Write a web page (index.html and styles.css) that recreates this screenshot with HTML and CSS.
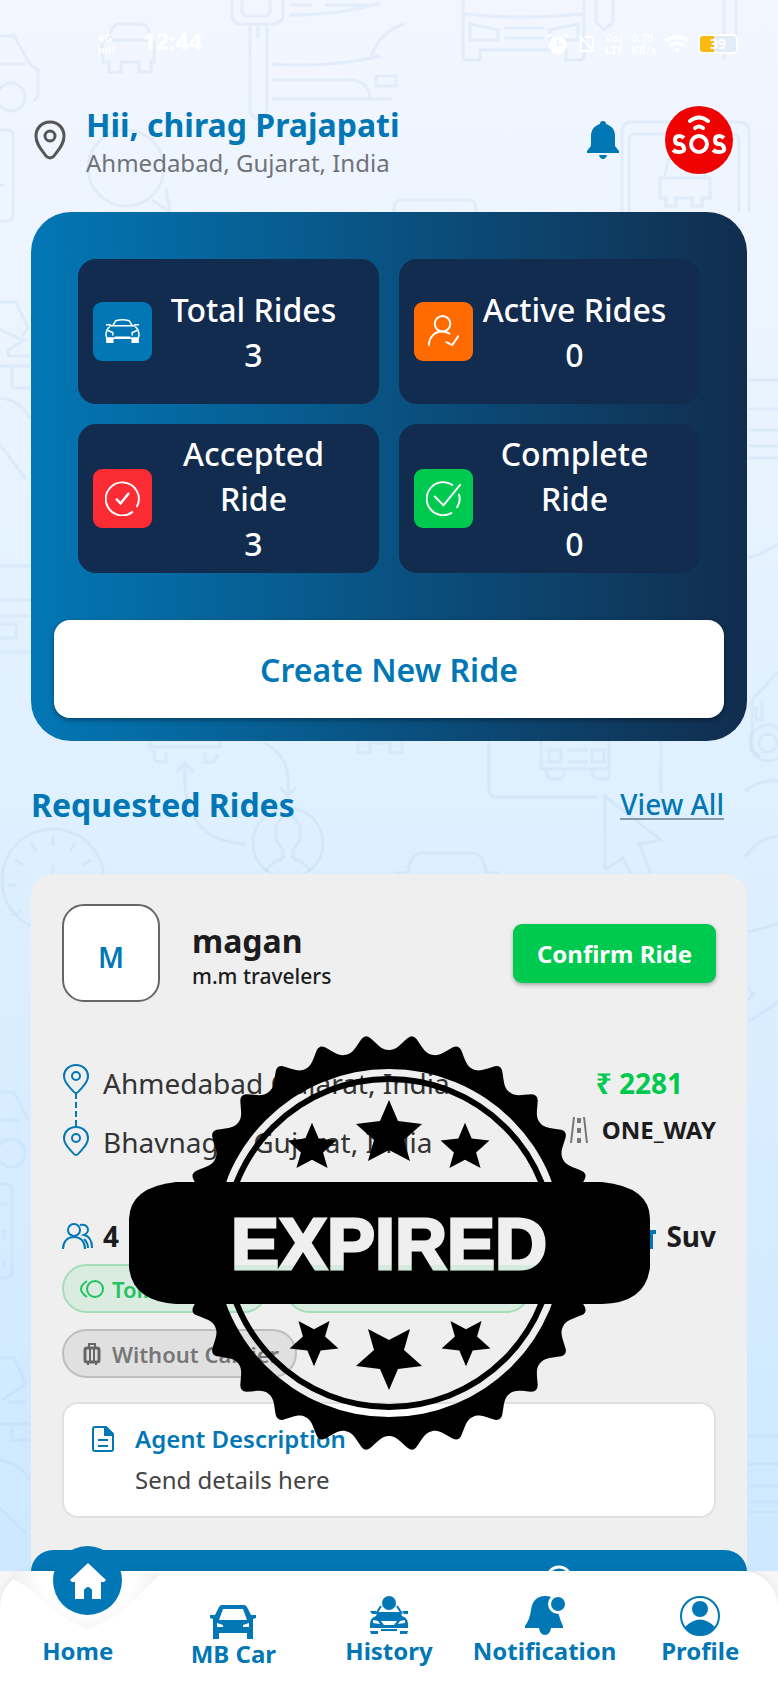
FILE: index.html
```html
<!DOCTYPE html>
<html lang="en">
<head>
    <meta charset="UTF-8">
    <meta name="viewport" content="width=device-width, initial-scale=1.0">
    <title>MB Car</title>
    <link rel="stylesheet" href="styles.css">
</head>
<body>
    <svg class="doodles" viewBox="0 0 778 1688" preserveAspectRatio="xMidYMin slice" aria-hidden="true">
        <!-- top -->
        <path d="M0 36h14l16 28 8 6v26l-4 5M0 64h26"/><circle cx="11" cy="97" r="14"/>
        <path d="M110 40q0-16 10-16h20q10 0 10 16M102 46q0-6 6-6h40q6 0 6 6v16h-3v10h-12v-10h-18v10h-12v-10h-6z"/>
        <path d="M232 0v14q0 10 10 10h30q11 0 11-10V0M242 0v10q0 6 6 6h16q6 0 6-6V0M250 24v88q8 14 17 0V24M258 24v14"/>
        <path d="M290 5h22M325 5h45M290 15q50 0 90-12M272 64q60 4 108-8M272 80h80q18 2 18 20M272 99h120M370 60q8-28 34-36M376 76h20v10h-20z"/>
        <path d="M463 0v56q0 4 5 4h12v-10h86v10h12q6 0 6-4V0M463 14q60 6 120 0M470 24l28 6v10h-28zM504 28h40M504 38h40M578 24l-28 6v10h28z"/>
        <path d="M596 0v22l8 8 9-8V0M724 0v60M736 0v40"/>
        <circle cx="126" cy="168" r="38"/><path d="M152 200l18 12-4-24"/>
        <path d="M622 212v-80q0-10 10-10h107q10 0 10 10v80M629 212v-72q0-6 6-6h97q7 0 7 6v72M664 178l6-24h30l6 24M660 178h50v20h-8v8h-10v-8h-16v8h-10v-8h-6z"/>
        <path d="M394 212v-4q0-8 8-8h66q8 0 8 8v4M0 130h8q5 0 5 5v80q0 6-6 6H0M0 185h4"/>
        <!-- sides of the stats card -->
        <path d="M0 302h16l12 26-6 8M0 330l24 10-16 10v6h22M0 366h30M12 366v18q0 4 4 4h14M0 398q20 2 30 20M0 445l26 34M0 566h31M0 600h31M0 616h30M0 624h16v14H0M0 652h31"/>
        <path d="M748 380h30M748 409h30M748 430h30M748 446h30M748 458h30M748 558q14-4 30-14M752 700l26-28M752 700v50l8 6M756 706v14h6v-20"/><circle cx="768" cy="743" r="18"/><circle cx="768" cy="743" r="9"/>
        <path d="M745 791q16-12 33-10M745 857q16-22 33-20"/>
        <!-- headings strip -->
        <path d="M150 741v6h70v-6M154 750v6q0 6 6 6h6v-10M205 752v10h6q6 0 6-8M185 762q-6 80 62 82M176 772l9-9 9 9M264 743q28 12 24 52M280 788l8 8 8-8"/>
        <circle cx="288" cy="843" r="35"/><path d="M276 826q12-22 24 0v14l-7 10v8q14 6 18 14M276 826v14l7 10v8q-14 6-18 14"/>
        <circle cx="53" cy="880" r="51"/><path d="M53 836v10M31 843l5 8M75 843l-5 8M15 860l8 5M91 860l-8 5M53 865v20M12 915l9-4M8 885h8"/>
        <path d="M358 741v12h12v-10h20v10h12v-12M489 741v48q0 8 8 8h100M661 741v52M541 741v28h68v-28M549 750h12v12h-12zM568 750h20M568 762h20M592 750h12v12h-12zM546 771q0 8 8 8h6q4-2 4-8M592 771q0 8 8 8h6q4-2 4-8"/>
        <path d="M605 870v-74l56 44-22 4 12 30M605 870l18-12 8 16M394 873h14q2-20 14-20h50q12 0 14 20h12"/>
        <!-- sides of the ride card -->
        <path d="M748 932l30-8M748 1000l6-6-6-6M748 1022l30-20M0 1092h14l14 28M0 1120h20M0 1184h6q6 0 6 6v84q0 4-12 4M0 1204h8M4 1230v10M4 1260v8"/><circle cx="11" cy="1153" r="14"/>
        <path d="M0 1358h14l12 26-24 16M8 1402h18M0 1424h30M12 1424v16h18M0 1460q20 4 30 20M0 1508l26 26M748 1436h30M748 1464h30M748 1486h30M748 1502h30M748 1512h30"/>
    </svg>

    <div class="status-bar">
        <div class="status-left">
            <span class="network">4G<br>ıııll</span>
            <span class="clock">12:44</span>
        </div>
        <div class="status-right">
            <svg width="22" height="22" viewBox="0 0 22 22" fill="#fff"><circle cx="11" cy="12" r="9"/><path d="M1 4l4-3M21 4l-4-3" stroke="#fff" stroke-width="2"/><path d="M11 7v5h4" fill="none" stroke="#eef5fe" stroke-width="2"/></svg>
            <svg width="20" height="20" viewBox="0 0 20 20" fill="none" stroke="#fff" stroke-width="2"><path d="M2 2l16 16M4 6v11h13M7 3h9v10"/></svg>
            <span class="tiny">Vo)<br>LTE</span>
            <span class="tiny">0.70<br>KB/s</span>
            <svg width="26" height="20" viewBox="0 0 26 20" fill="none" stroke="#fff" stroke-width="4"><path d="M2 7q11-9 22 0M6 12q7-6 14 0"/><path d="M11 16h4"/></svg>
            <span class="battery">39</span>
        </div>
    </div>

    <header class="header">
        <svg class="pin" viewBox="0 0 32 40" fill="none" stroke="#555" stroke-width="3"><path d="M16 2C7 2 2 9 2 16c0 9 6 14 10 20q4 4 8 0c4-6 10-11 10-20C30 9 25 2 16 2z"/><circle cx="16" cy="16" r="5"/></svg>
        <div class="greeting">
            <h1>Hii, chirag Prajapati</h1>
            <p>Ahmedabad, Gujarat, India</p>
        </div>
        <button class="icon-btn" aria-label="Notifications">
            <svg width="32" height="38" viewBox="0 0 32 38" fill="#0277b5"><path d="M16 0q3 0 3 3c6 2 9 6 9 12v10l4 5v2H0v-2l4-5V15c0-6 3-10 9-12q0-3 3-3zM12 34h8q-1 4-4 4t-4-4z"/></svg>
        </button>
        <button class="sos" aria-label="SOS">
            <svg width="68" height="68" viewBox="0 0 68 68"><circle cx="34" cy="34" r="34" fill="#ee0202"/><g fill="none" stroke="#fff" stroke-width="4"><path d="M25 15q9-7 18 0M30 22q4-3 8 0" stroke-linecap="round"/><circle cx="34" cy="38" r="8"/><path d="M19 32q-2-2-5-2-4 0-4 4t4 4 5 4-5 4q-4 0-6-2M59 32q-2-2-5-2-4 0-4 4t4 4 5 4-5 4q-4 0-6-2"/></g></svg>
        </button>
    </header>

    <main>
        <section class="stats-card">
            <div class="stats">
                <div class="stat">
                    <span class="stat-icon blue"><svg viewBox="0 0 36 36" fill="none" stroke="#fff" stroke-width="1.600"><path d="M8 12l3-5q7-2 14 0l3 5M5 12h26M1 11h5M35 11h-5M5 13q-4 3-4 9l1 3h32l1-3q0-6-4-9M10 24h16M3 17l5 2v3M33 17l-5 2v3"/><path d="M2 25h6v4H2zM28 25h6v4h-6z" fill="#fff"/></svg></span>
                    <p>Total Rides<br>3</p>
                </div>
                <div class="stat">
                    <span class="stat-icon orange"><svg viewBox="0 0 36 36" fill="none" stroke="#fff" stroke-width="2" stroke-linecap="round"><circle cx="17" cy="10" r="8"/><path d="M3 32c0-8 6-14 13-14 3 0 6 1 8 2M21 29l6 3 6-9"/></svg></span>
                    <p>Active Rides<br>0</p>
                </div>
                <div class="stat">
                    <span class="stat-icon red"><svg viewBox="0 0 36 36" fill="none" stroke="#fff" stroke-width="2" stroke-linecap="round"><path d="M28 32A17 17 0 1 1 33 26"/><path d="M12 19l4 4 8-10" stroke-width="2.500"/></svg></span>
                    <p>Accepted Ride<br>3</p>
                </div>
                <div class="stat">
                    <span class="stat-icon green"><svg viewBox="0 0 36 36" fill="none" stroke="#fff" stroke-width="2" stroke-linecap="round"><path d="M27 4A17 17 0 1 0 26 33M34 14q2 7-2 13M9 16l9 9L35 4"/></svg></span>
                    <p>Complete Ride<br>0</p>
                </div>
            </div>
            <button class="create-btn">Create New Ride</button>
        </section>

        <div class="section-head">
            <h2>Requested Rides</h2>
            <a href="#">View All</a>
        </div>

        <article class="ride">
            <div class="ride-body">
                <div class="ride-top">
                    <span class="avatar">M</span>
                    <div class="agent">
                        <h3>magan</h3>
                        <p>m.m travelers</p>
                    </div>
                    <button class="confirm-btn">Confirm Ride</button>
                </div>

                <div class="route">
                    <svg class="route-line" width="26" height="92" viewBox="0 0 26 92" fill="none" stroke="#0277b5" stroke-width="2"><g id="pin"><path d="M13 1C6 1 1 6 1 12c0 7 5 10 9 15q3 4 6 0c4-5 9-8 9-15C25 6 20 1 13 1z"/><circle cx="13" cy="12" r="4"/></g><use href="#pin" y="62"/><path d="M13 29v34" stroke-dasharray="6 3"/></svg>
                    <div class="places">
                        <p>Ahmedabad Gujarat, India</p>
                        <p>Bhavnagar Gujarat, India</p>
                    </div>
                    <div class="fare">
                        <p class="price">₹ 2281</p>
                        <p class="trip">
                            <svg width="18" height="26" viewBox="0 0 18 26" fill="none" stroke="#777" stroke-width="2"><path d="M4 0L1 26M14 0l3 26"/><path d="M9 1v25" stroke-width="4" stroke-dasharray="5 5"/></svg>
                            ONE_WAY
                        </p>
                    </div>
                </div>

                <div class="details">
                    <span class="detail"><svg width="31" height="26" viewBox="0 0 31 26" fill="none" stroke="#0277b5" stroke-width="2"><circle cx="12" cy="7" r="6"/><path d="M1 26c0-7 4-12 11-12s11 5 11 12M18 2c8-2 11 7 4 10 5 1 8 6 8 13M22 16q4 4 4 9"/></svg>4</span>
                    <span class="detail"><svg width="36" height="26" viewBox="0 0 36 26" fill="#0277b5"><path d="M6 7l3-7h18l3 7h6v4h-3v15h-6v-5H9v5H3V11H0V7z"/></svg>Suv</span>
                </div>

                <div class="chips">
                    <span class="chip chip-green"><svg width="24" height="18" viewBox="0 0 24 18" fill="none" stroke="#22c362" stroke-width="2"><circle cx="15" cy="9" r="8"/><path d="M7 1q-6 4-6 8t6 8"/></svg>Toll</span>
                    <span class="chip chip-green wide"></span>
                    <span class="chip chip-grey"><svg width="24" height="22" viewBox="0 0 24 22" fill="none" stroke="#666" stroke-width="2"><path d="M9 5V1h6v4"/><rect x="5" y="5" width="14" height="14" rx="2" stroke-width="3"/><path d="M10 6v13M14 6v13M8 19v3M16 19v3"/></svg>Without Carrier</span>
                </div>

                <div class="description">
                    <svg width="22" height="26" viewBox="0 0 22 26" fill="none" stroke="#0277b5" stroke-width="2"><path d="M3 1h11l7 7v15q0 2-2 2H3q-2 0-2-2V3q0-2 2-2zM6 14h10M6 20h10"/><path d="M13 1v8h8z" fill="#0277b5"/></svg>
                    <div>
                        <h4>Agent Description</h4>
                        <p>Send details here</p>
                    </div>
                </div>
            </div>
            <div class="ride-footer">
                <svg width="28" height="28" viewBox="0 0 28 28" fill="none" stroke="#fff" stroke-width="3"><circle cx="14" cy="14" r="12"/></svg>
            </div>

            <svg class="stamp" viewBox="0 0 522 416">
                <defs>
                    <path id="star" d="M0-34L9-13 33-10 15 6 21 27 0 16-21 27-15 6-33-10-9-13z"/>
                    <linearGradient id="cut" x1="0" y1="182" x2="0" y2="235" gradientUnits="userSpaceOnUse">
                        <stop offset="0.900" stop-color="#efefef"/>
                        <stop offset="0.900" stop-color="#d6ebdf"/>
                    </linearGradient>
                </defs>
                <path id="gear" fill-rule="evenodd"/>
                <circle cx="261" cy="208" r="164" fill="none" stroke="#000" stroke-width="6"/>
                <use href="#star" transform="translate(261 99)"/>
                <use href="#star" transform="translate(184 113) scale(.74)"/>
                <use href="#star" transform="translate(337 113) scale(.74)"/>
                <use href="#star" transform="translate(261 321) scale(1 -1)"/>
                <use href="#star" transform="translate(186 306) scale(.74 -.74)"/>
                <use href="#star" transform="translate(338 306) scale(.74 -.74)"/>
                <path d="M48 147H474Q522 152 522 184V232Q518 268 474 269H48Q4 266 1 232V184Q2 152 48 147z"/>
                <text x="261" y="234" text-anchor="middle" fill="url(#cut)" stroke="url(#cut)" stroke-width="3">EXPIRED</text>
            </svg>
        </article>
    </main>

    <nav class="nav">
        <svg class="notch" width="156" height="60" viewBox="0 0 156 60" aria-hidden="true">
            <defs><radialGradient id="shade" gradientUnits="userSpaceOnUse" cx="74" cy="-6" r="80"><stop offset=".6" stop-color="#fff"/><stop offset="1" stop-color="#ececec"/></radialGradient></defs>
            <path d="M0 8Q14 14 30 30 50 48 74 58 100 50 118 32 134 16 148 2L0 0z" fill="url(#shade)"/>
        </svg>
        <a class="nav-item active" href="#">
            <span class="nav-circle"><svg width="36" height="36" viewBox="0 0 36 36" fill="#fff"><path d="M18 0L36 17l-2 2h-3v17h-9V27q-4-6-8 0v9H5V19H2l-2-2z"/></svg></span>
            Home
        </a>
        <a class="nav-item car" href="#">
            <svg width="48" height="34" viewBox="0 0 48 34" fill="#0277b5"><path fill-rule="evenodd" d="M13 0h22q2 0 3 2l4 8h5v3l-3 1v20h-6v-6H10v6H4V14l-3-1v-3h5l4-8q1-2 3-2zM14 4l-4 11h28L34 4zM8 18v4h6v-2zM40 18v4h-6v-2z"/></svg>
            MB Car
        </a>
        <a class="nav-item" href="#">
            <svg width="40" height="40" viewBox="0 0 40 40" fill="#0277b5"><circle cx="20" cy="7" r="7"/><path fill-rule="evenodd" d="M9 16h22l2 4q6 2 6 8v4H1v-4q0-6 6-8zM4 24v3l7 1-2-3zM36 24v3l-7 1 2-3zM12 25l3 4h10l3-4zM1 35h8v3H2zM31 35h8l-1 3h-7zM12 33h16v2H12zM1 15h6v3H3zM33 15h6v3h-4z"/><path d="M12 10l-5 8M28 10l5 8" stroke="#0277b5" stroke-width="2"/></svg>
            History
        </a>
        <a class="nav-item" href="#">
            <svg width="40" height="40" viewBox="0 0 40 40" fill="#0277b5"><path d="M20 0q8 0 11 5 2 6 2 11 2 8 5 14v2H26q-1 7-6 7t-6-7H0v-2q5-7 6-16Q8 0 20 0z"/><circle cx="33" cy="8" r="10" fill="#fff"/><circle cx="33" cy="8" r="7"/></svg>
            Notification
        </a>
        <a class="nav-item" href="#">
            <svg width="40" height="40" viewBox="0 0 40 40" fill="#0277b5"><circle cx="20" cy="20" r="19" fill="none" stroke="#0277b5" stroke-width="2"/><circle cx="20" cy="13" r="8"/><path d="M5 31q15-15 30 0Q28 39 20 39T5 31z"/></svg>
            Profile
        </a>
    </nav>

    <script src="script.js"></script>
</body>
</html>
```
FILE: styles.css
```css
* { box-sizing: border-box; }
body { margin: 0; min-height: 100vh; position: relative; overflow-x: hidden; font-family: "Noto Sans", sans-serif; color: #1c1c1e; background: linear-gradient(#f2f6ff 0, #eef5ff 200px, #dff0ff 800px, #cde8ff 1600px); }
h1, h2, h3, h4, p { margin: 0; }
button { font-family: inherit; border: 0; padding: 0; cursor: pointer; }
svg { flex: none; display: block; }

.doodles { position: absolute; top: 0; left: 0; width: 100%; height: 100%; fill: none; stroke: #b0cde8; stroke-opacity: .22; stroke-width: 3; }

.status-bar { position: relative; display: flex; justify-content: space-between; align-items: center; height: 88px; padding: 0 40px 0 98px; color: #fff; }
.status-left, .status-right { display: flex; align-items: center; gap: 8px; }
.network, .tiny { font-size: 11px; line-height: 12px; font-weight: 700; }
.network { padding-right: 20px; }
.clock { font-size: 23px; line-height: 24px; padding-bottom: 6px; font-weight: 800; }
.battery { width: 40px; height: 20px; border: 2px solid #fff; border-radius: 5px; background: linear-gradient(90deg, #fcb90f 40%, #e2ebf8 40%); font-size: 14px; line-height: 16px; font-weight: 700; text-align: center; }

.header { position: relative; display: flex; align-items: center; padding: 0 45px 0 34px; height: 104px; }
.pin { width: 32px; height: 40px; margin-right: 20px; }
.greeting { flex: 1; padding-top: 5px; }
.greeting h1 { font-size: 32px; line-height: 40px; color: #0277b5; }
.greeting p { font-size: 24px; line-height: 36px; color: #6f7379; }
.icon-btn { background: none; margin-right: 46px; }
.sos { background: none; border-radius: 50%; }

main { position: relative; padding: 20px 31px 0; }
.stats-card { padding: 47px 23px 23px; border-radius: 40px; background: linear-gradient(90deg, #0277b5, #112d4e); }
.stats { display: grid; grid-template-columns: 1fr 1fr; gap: 20px; padding: 0 24px; }
.stat { display: flex; align-items: center; min-height: 145px; padding: 7px 24px 7px 15px; border-radius: 18px; background: #122c4f; color: #fff; }
.stat p { flex: 1; text-align: center; font-size: 32px; line-height: 45px; font-weight: 500; }
.stat-icon { flex: none; width: 59px; height: 59px; padding: 12px; border-radius: 9px; }
.blue { background: #0277b5; }
.orange { background: #ff6b00; }
.red { background: #fb2c33; }
.green { background: #00c950; }
.create-btn { display: block; width: 100%; height: 98px; margin-top: 47px; border-radius: 16px; background: #fff; color: #0277b5; font-size: 32px; font-weight: 600; box-shadow: 0 2px 5px rgba(0, 0, 0, .4); }

.section-head { display: flex; justify-content: space-between; align-items: center; height: 133px; padding: 0 23px 6px 0; }
.section-head h2 { font-size: 32px; color: #0277b5; }
.section-head a { font-size: 28px; line-height: 28px; font-weight: 500; color: #0277b5; text-decoration: none; border-bottom: 2px solid #8a9aa6; }

.ride { position: relative; border-radius: 22px 22px 0 0; background: #efefef; }
.ride-body { padding: 30px 31px 32px; }
.ride-top { display: flex; align-items: center; height: 98px; }
.avatar { width: 98px; height: 98px; margin-right: 32px; border: 2px solid #666; border-radius: 22px; background: #fff; color: #0277b5; font-size: 28px; font-weight: 600; line-height: 102px; text-align: center; }
.agent { flex: 1; padding-top: 8px; }
.agent h3 { font-size: 32px; line-height: 38px; }
.agent p { font-size: 21px; line-height: 32px; font-weight: 500; }
.confirm-btn { width: 203px; height: 59px; border-radius: 9px; background: #00c950; color: #fff; font-size: 24px; font-weight: 700; box-shadow: 0 2px 4px rgba(0, 0, 0, .3); }

.route { display: flex; margin-top: 52px; }
.route-line { margin: 10px 14px 0 1px; }
.places { flex: 1; font-size: 28px; line-height: 59px; color: #333; }
.fare { text-align: right; font-weight: 700; }
.price { padding-right: 33px; font-size: 28px; line-height: 59px; color: #00c950; }
.trip { display: flex; align-items: center; justify-content: flex-end; gap: 14px; font-size: 24px; line-height: 34px; }

.details { display: flex; justify-content: space-between; margin-top: 44px; font-size: 28px; line-height: 40px; font-weight: 700; }
.detail { display: flex; align-items: center; gap: 10px; }

.chips { display: flex; flex-wrap: wrap; gap: 16px 17px; margin-top: 8px; }
.chip { display: flex; align-items: center; gap: 8px; height: 49px; padding: 0 16px; border: 2px solid; border-radius: 25px; font-size: 22px; font-weight: 600; }
.chip-green { width: 206px; color: #22c362; background: #d9ecdf; border-color: #a5dcb9; }
.wide { width: 246px; }
.chip-grey { color: #777; background: #e0e0e0; border-color: #bdbdbd; }

.description { display: flex; gap: 21px; margin-top: 24px; padding: 15px 28px; border: 2px solid #e0e0e0; border-radius: 16px; background: #fff; }
.description svg { margin-top: 7px; }
.description h4 { font-size: 24px; line-height: 40px; font-weight: 600; color: #0277b5; }
.description p { font-size: 24px; line-height: 42px; color: #444; }

.ride-footer { height: 60px; padding: 15px 174px; border-radius: 22px 22px 0 0; background: #0277b5; display: flex; justify-content: flex-end; }

.stamp { position: absolute; top: 161px; left: 50%; width: 522px; height: 416px; transform: translateX(-50%); }
.stamp text { font-family: "Liberation Sans", Arial, sans-serif; font-size: 72px; font-weight: 700; }

.nav { position: fixed; left: 0; right: 0; bottom: 0; height: 117px; display: grid; grid-template-columns: repeat(5, 1fr); background: #f6f6f6; }
.nav::before { content: ""; position: absolute; inset: 0; border-radius: 36px 36px 0 0; background: #fff; box-shadow: 0 0 8px rgba(0, 0, 0, .08); }
.notch { position: absolute; left: 13px; top: 0; }
.nav-item { position: relative; display: flex; flex-direction: column; align-items: center; padding-top: 25px; color: #0277b5; text-decoration: none; font-size: 24px; line-height: 30px; font-weight: 700; }
.car { padding-top: 34px; }
.active { padding-top: 65px; }
.nav-circle { position: absolute; left: 53px; top: -25px; width: 69px; height: 69px; padding: 17px; border-radius: 50%; background: #0277b5; }
```
FILE: script.js
```js
// scalloped edge of the expired stamp: 28 teeth round a hole
const cx = 261, cy = 208, teeth = 28;
const step = 360 / teeth;

function point(deg, r) {
    const a = deg * Math.PI / 180;
    return (cx + r * Math.sin(a)).toFixed(1) + ' ' + (cy - r * Math.cos(a)).toFixed(1);
}

let d = 'M' + point(0, 193);
for (let i = 0; i < teeth; i++) {
    const tip = i * step + step / 2;
    d += 'C' + point(tip - 4.2, 193) + ' ' + point(tip - 3.2, 199) + ' ' + point(tip - 1.2, 206);
    d += 'Q' + point(tip, 210) + ' ' + point(tip + 1.2, 206);
    d += 'C' + point(tip + 3.2, 199) + ' ' + point(tip + 4.2, 193) + ' ' + point(tip + step / 2, 193);
}
d += 'zM' + point(0, 174) + 'A174 174 0 1 0 ' + point(180, 174) + 'A174 174 0 1 0 ' + point(0, 174) + 'z';
document.getElementById('gear').setAttribute('d', d);
```
